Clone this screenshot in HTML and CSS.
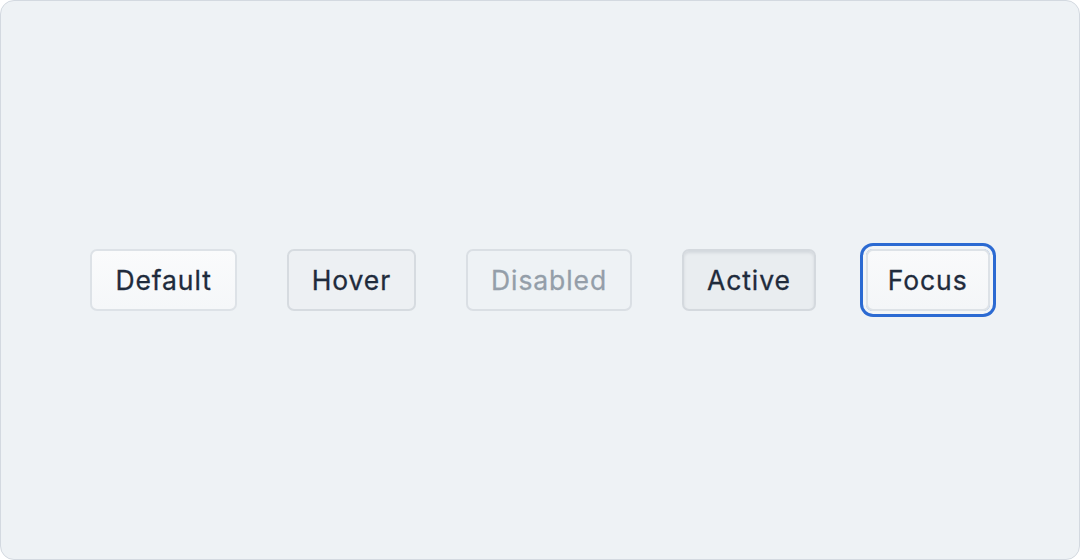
FILE: index.html
```html
<!DOCTYPE html>
<html>
<head>
<meta charset="utf-8">
<link rel="stylesheet" href="styles.css">
</head>
<body>
<div class="frame">
  <div class="row">
    <button class="btn">Default</button>
    <button class="btn hover">Hover</button>
    <button class="btn disabled" disabled>Disabled</button>
    <button class="btn active">Active</button>
    <button class="btn focus">Focus</button>
  </div>
</div>
</body>
</html>
```
FILE: styles.css
```css
* { box-sizing: border-box; }
html, body { margin: 0; padding: 0; }
body { width: 1080px; height: 560px; background: #ffffff; }
.frame {
  width: 1080px;
  height: 560px;
  border: 1px solid #d3d9e0;
  border-radius: 14px;
  background: #eef2f5;
  display: flex;
  align-items: center;
  justify-content: center;
}
.row {
  display: flex;
  gap: 50px;
  align-items: center;
}
.btn {
  font-family: Inter, "Noto Sans", sans-serif;
  font-size: 26.5px;
  font-weight: 400;
  color: #1f2b3c;
  height: 62px;
  padding: 0 23px;
  border: 2px solid #dde2e7;
  border-radius: 7px;
  background: linear-gradient(#fafbfc, #f5f7f9);
  letter-spacing: 0.9px;
  -webkit-text-stroke: 0.3px currentColor;
}
.hover {
  background: #edf0f3;
  border-color: #d6dbe0;
}
.disabled {
  background: #eef2f5;
  border-color: #dadfe4;
  color: #949ea9;
}
.active {
  background: #e9edf0;
  border-color: #d4d9de;
  box-shadow: inset 0 2px 3px rgba(30, 41, 59, 0.10);
}
.focus {
  padding: 0 20px;
  background: linear-gradient(#f9fafb, #f4f6f8);
  border-color: #dde2e7;
  box-shadow: 0 0 0 3px #f2f5f7, 0 0 0 6px #2b6ad2;
}
```
